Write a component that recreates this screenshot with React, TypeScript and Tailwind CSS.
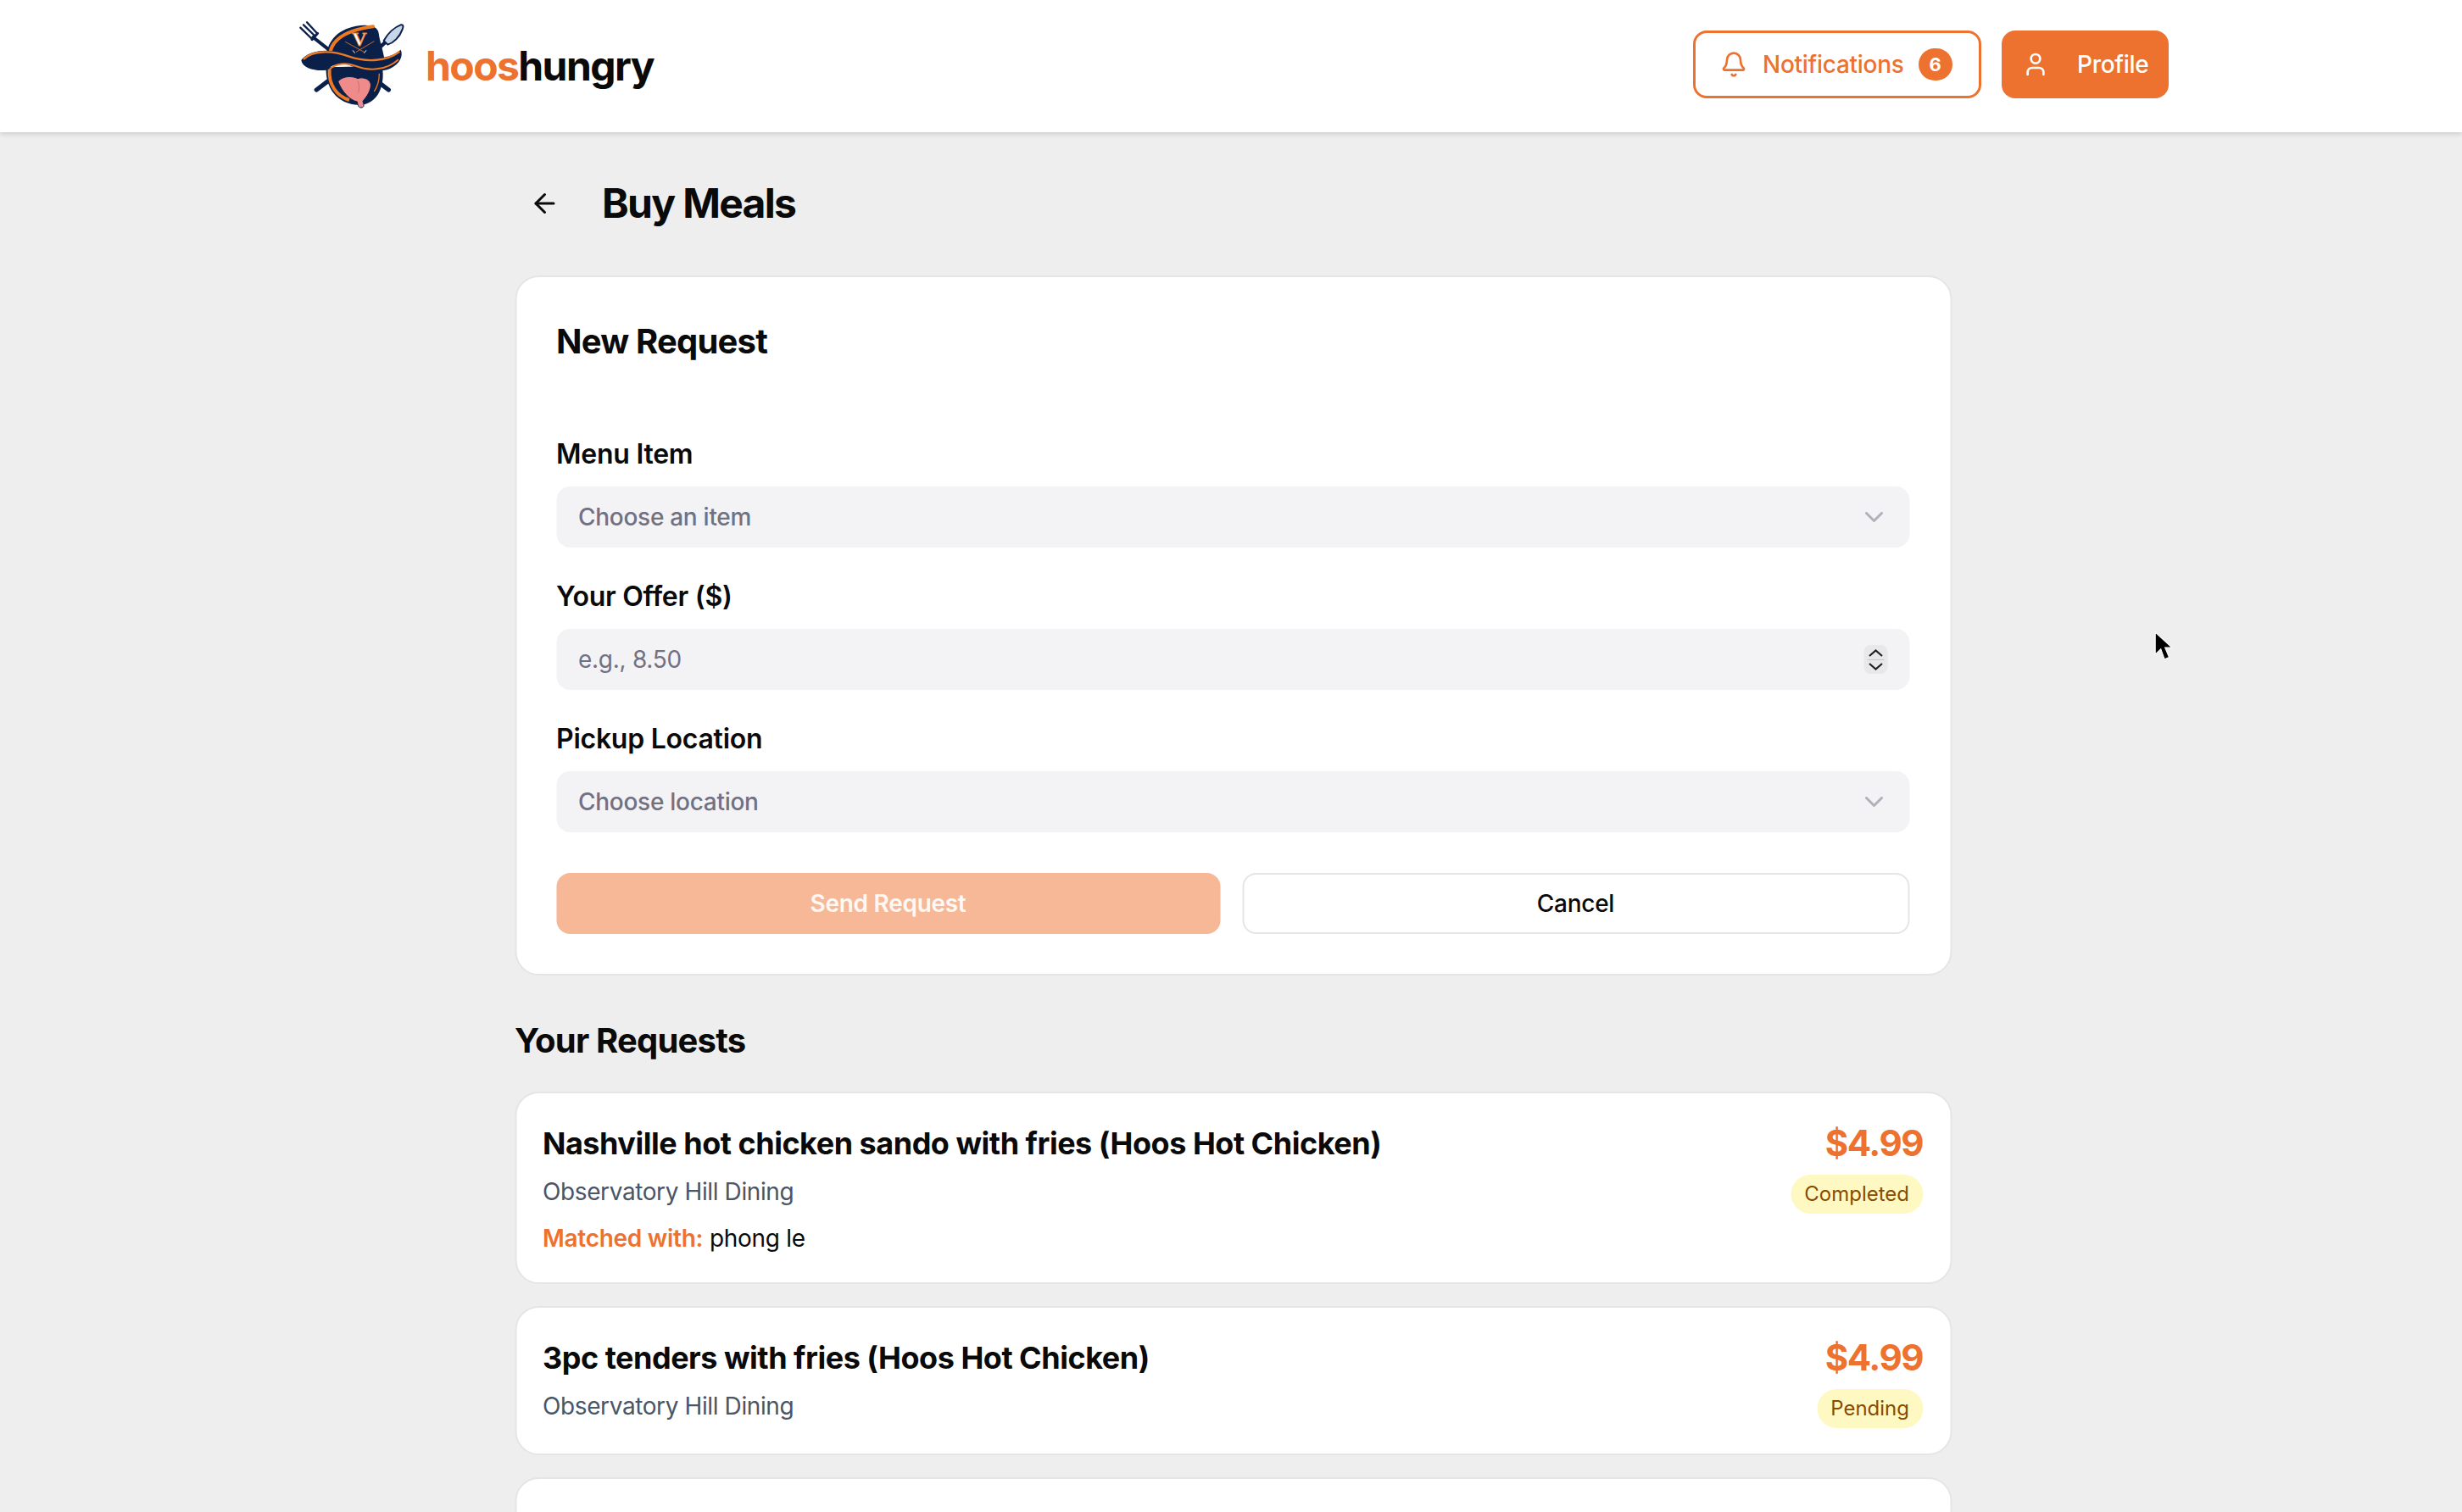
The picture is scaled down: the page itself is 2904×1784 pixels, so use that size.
import { ArrowLeft, Bell, ChevronDown, User } from "lucide-react";

const orange = "text-[#ed7230]";

function Logo() {
  return (
    <svg viewBox="18 0 432 360" className="h-[120px] w-[144px] shrink-0">
      {/* crossed fork and knife */}
      <g stroke="#0b2049" strokeLinecap="round" fill="none">
        <path d="M100 270 L150 232" strokeWidth="16" />
        <path d="M355 270 L305 232" strokeWidth="16" />
        <path d="M88 84 L140 125" strokeWidth="12" />
        <path d="M43 50 L84 90 M54 40 L93 78 M66 31 L102 70" strokeWidth="7" />
        <path d="M84 92 L104 70" strokeWidth="9" />
        <path d="M315 128 L345 100" strokeWidth="13" />
      </g>
      <path d="M338 96 C352 70 376 48 398 40 C408 38 408 46 404 56 C394 84 372 104 352 110 Z" fill="#c6d6e8" stroke="#0b2049" strokeWidth="6" strokeLinejoin="round" />
      {/* crown */}
      <path d="M132 165 C136 100 170 58 240 44 C285 36 318 44 320 70 C324 100 336 130 342 170 Z" fill="#0b2049" />
      <path d="M148 160 C142 110 180 62 300 46" fill="none" stroke="#ed7a22" strokeWidth="12" strokeLinecap="round" />
      {/* face */}
      <path d="M134 190 C130 262 172 322 250 324 C320 322 344 250 332 186 Z" fill="#0b2049" />
      <path d="M146 198 C142 250 170 292 216 306" fill="none" stroke="#ed7a22" strokeWidth="12" />
      <path d="M322 212 C322 240 316 258 304 276" fill="none" stroke="#ed7a22" strokeWidth="4" />
      {/* brim */}
      <path d="M46 165 C70 130 140 120 215 145 C290 170 360 160 398 128 C408 150 395 178 360 195 C320 212 260 200 215 182 C180 170 150 185 135 200 C100 205 50 195 46 165 Z" fill="#0b2049" />
      <path d="M56 160 C85 132 150 128 215 152 C280 174 350 168 392 136" fill="none" stroke="#ed7a22" strokeWidth="7" strokeLinecap="round" />
      <path d="M146 198 C168 176 205 172 240 186 C290 206 350 198 388 164" fill="none" stroke="#ed7a22" strokeWidth="6" strokeLinecap="round" />
      {/* V and sabres */}
      <text x="252" y="113" textAnchor="middle" fontFamily="'Liberation Serif', serif" fontWeight="700" fontSize="72" fill="#fff" stroke="#ed7a22" strokeWidth="2.5">V</text>
      <path d="M202 100 L268 136 M304 98 L240 136" stroke="#ed7a22" strokeWidth="2.5" fill="none" />
      <path d="M228 130 L236 140 M276 130 L268 140" stroke="#fff" strokeWidth="3" />
      {/* tongue */}
      <path d="M176 240 C194 220 226 220 246 230 C266 222 296 234 292 258 C288 282 274 298 264 310 C268 324 270 332 258 333 C246 333 246 320 244 312 C220 308 190 278 176 240 Z" fill="#ef8b8b" stroke="#0b2049" strokeWidth="3" />
      <path d="M246 238 C252 252 252 266 248 280" fill="none" stroke="#d86a6e" strokeWidth="3" />
    </svg>
  );
}

function Chevron({ up }: { up?: boolean }) {
  return (
    <svg viewBox="0 0 18 9" className="h-[9px] w-[18px]">
      <path d={up ? "M1.5 8 L9 1.5 L16.5 8" : "M1.5 1 L9 7.5 L16.5 1"} fill="none" stroke="currentColor" strokeWidth="2.2" />
    </svg>
  );
}

function Field({ label, value, stepper }: { label: string; value: string; stepper?: boolean }) {
  return (
    <div>
      <label className="mb-[18px] block text-[32px] leading-[40px] font-semibold tracking-[-0.008em] text-[#0a0a0a]">{label}</label>
      <div className="flex h-[72px] items-center justify-between rounded-[16px] bg-[#f3f3f5] pr-[24px] pl-[26px] text-[28px] font-medium tracking-[-0.01em] text-[#717182]">
        <span className={stepper ? "font-normal" : ""}>{value}</span>
        {stepper ? (
          <span className="mr-[2px] flex h-[34px] w-[28px] flex-col items-center justify-center gap-[3px] rounded-[8px] bg-[#e8e8ea] text-[#222]">
            <Chevron up />
            <span className="h-px w-[20px] bg-[#c8c8cc]" />
            <Chevron />
          </span>
        ) : (
          <ChevronDown className="h-[36px] w-[36px] text-[#717182] opacity-50" strokeWidth={2} />
        )}
      </div>
    </div>
  );
}

function RequestCard({ title, status, matched }: { title: string; status: string; matched?: string }) {
  return (
    <div className="flex justify-between rounded-[28px] border-2 border-[#e5e5e5] bg-white pt-[30px] pr-[32px] pb-[30px] pl-[31px]">
      <div>
        <h3 className="text-[36px] leading-[58px] font-bold tracking-[-0.0135em] text-[#0a0a0a]">{title}</h3>
        <p className="mt-[8px] text-[28px] leading-[40px] tracking-[-0.014em] text-[#4a5565]">Observatory Hill Dining</p>
        {matched && (
          <p className="mt-[15px] mb-[2px] text-[28px] leading-[40px] tracking-[-0.01em] text-[#0a0a0a]">
            <span className={`font-semibold ${orange}`}>Matched with:</span> {matched}
          </p>
        )}
      </div>
      <div className="flex flex-col items-end">
        <span className={`text-[42px] leading-[58px] font-bold tracking-[-0.035em] ${orange}`}>$4.99</span>
        <span className="mt-[8px] rounded-full bg-[#fef9c2] px-[16px] text-[24px] leading-[46px] font-normal text-[#894b00]">
          {status}
        </span>
      </div>
    </div>
  );
}

export default function App() {
  return (
    <div className="relative h-[1784px] overflow-hidden bg-[#eeeeee] font-['Inter',sans-serif]">
      <header className="h-[156px] bg-white shadow-[0_2px_6px_rgba(0,0,0,0.15)]">
        <div className="mx-auto flex h-full w-[2212px] items-center justify-between">
          <div className="-mt-[4px] flex items-center gap-[12px]">
            <Logo />
            <span className="mt-[4px] text-[48px] font-bold tracking-[-0.033em] text-[#0a0a0a]">
              <span className={orange}>hoos</span>hungry
            </span>
          </div>
          <div className="-mt-[4px] flex gap-[24px]">
            <button className={`flex h-[80px] w-[340px] items-center rounded-[16px] border-[3px] border-[#ed7230] bg-white pl-[29px] text-[28px] font-medium tracking-[-0.01em] ${orange}`}>
              <Bell className="mr-[18px] h-[32px] w-[32px]" strokeWidth={2} />
              <span>Notifications</span>
              <span className="ml-[17px] flex h-[38px] w-[40px] items-center justify-center rounded-full bg-[#ed7230] text-[22px] font-bold text-white">6</span>
            </button>
            <button className="flex h-[80px] w-[197px] items-center gap-[33px] rounded-[16px] bg-[#ed7230] pl-[24px] text-[28px] font-medium tracking-[-0.01em] text-white">
              <User className="h-[32px] w-[32px]" strokeWidth={2} />
              <span>Profile</span>
            </button>
          </div>
        </div>
      </header>

      <main className="mx-auto w-[1695px] translate-x-[2.5px]">
        <div className="flex h-[169px] items-center pb-[2px]">
          <ArrowLeft className="ml-[17px] h-[36px] w-[36px] text-[#0a0a0a]" strokeWidth={2} />
          <h1 className="ml-[50px] text-[48px] font-bold tracking-[-0.035em] text-[#0a0a0a]">Buy Meals</h1>
        </div>

        <section className="rounded-[28px] border-2 border-[#e5e5e5] bg-white pt-[48px] pr-[48px] pb-[47px] pl-[47px]">
          <h2 className="mb-[85px] text-[40px] leading-[56px] font-bold tracking-[-0.02em] text-[#0a0a0a]">New Request</h2>
          <div className="flex flex-col gap-[38px]">
            <Field label="Menu Item" value="Choose an item" />
            <Field label="Your Offer ($)" value="e.g., 8.50" stepper />
            <Field label="Pickup Location" value="Choose location" />
          </div>
          <div className="mt-[48px] flex gap-[26px]">
            <button className="h-[72px] flex-1 rounded-[16px] bg-[#f6b896] text-[28px] font-semibold tracking-[-0.01em] text-white/90">Send Request</button>
            <button className="h-[72px] flex-1 rounded-[16px] border-2 border-[#e5e5e5] bg-white text-[28px] font-medium tracking-[-0.01em] text-[#0a0a0a]">Cancel</button>
          </div>
        </section>

        <h2 className="mt-[49px] mb-[32px] text-[40px] leading-[56px] font-bold tracking-[-0.02em] text-[#0a0a0a]">Your Requests</h2>
        <div className="flex flex-col gap-[26px]">
          <RequestCard title="Nashville hot chicken sando with fries (Hoos Hot Chicken)" status="Completed" matched="phong le" />
          <RequestCard title="3pc tenders with fries (Hoos Hot Chicken)" status="Pending" />
          <div className="h-[176px] rounded-[28px] border-2 border-[#e5e5e5] bg-white" />
        </div>
      </main>

      {/* mouse pointer left in the capture */}
      <svg viewBox="0 0 20 34" className="absolute top-[745px] left-[2541px] h-[37px] w-[22px]">
        <path d="M1 1 L1 25 L7 19 L11 30 L16 28 L11.5 17.5 L19 17.5 Z" fill="#000" stroke="#fff" strokeWidth="1" />
      </svg>
    </div>
  );
}
